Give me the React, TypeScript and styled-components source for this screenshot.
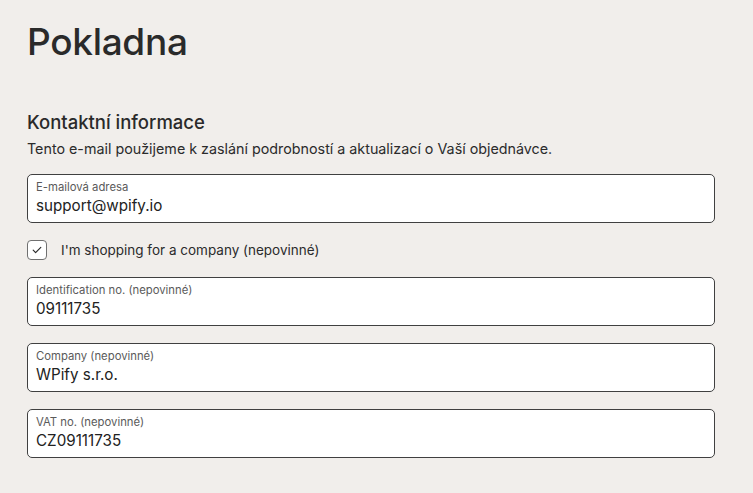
import React from 'react'
import styled, { createGlobalStyle } from 'styled-components'

const GlobalStyle = createGlobalStyle`
  html, body {
    margin: 0;
    padding: 0;
    background: #f1eeeb;
  }
  body {
    font-family: Inter, "Noto Sans", sans-serif;
    color: #2b2b2b;
  }
`

interface FieldProps {
  label: string
  value: string
}

function Field({ label, value }: FieldProps) {
  return (
    <FieldBox>
      <FieldLabel>{label}</FieldLabel>
      <FieldValue>{value}</FieldValue>
    </FieldBox>
  )
}

function App() {
  return (
    <Page>
      <GlobalStyle />
      <Title>Pokladna</Title>

      <Section>
        <SectionTitle>Kontaktní informace</SectionTitle>
        <Description>
          Tento e-mail použijeme k zaslání podrobností a aktualizací o Vaší objednávce.
        </Description>

        <Field label="E-mailová adresa" value="support@wpify.io" />

        <CheckRow>
          <CheckBox>
            <svg width="14" height="14" viewBox="0 0 14 14" fill="none">
              <path d="M3.2 7.2l2.4 2.4L10.8 4.4" stroke="#2b2b2b" strokeWidth="1.2" strokeLinecap="round" strokeLinejoin="round" />
            </svg>
          </CheckBox>
          <CheckLabel>I'm shopping for a company (nepovinné)</CheckLabel>
        </CheckRow>

        <Field label="Identification no. (nepovinné)" value="09111735" />
        <Field label="Company (nepovinné)" value="WPify s.r.o." />
        <Field label="VAT no. (nepovinné)" value="CZ09111735" />
      </Section>
    </Page>
  )
}

const Page = styled.div`
  width: 688px;
  padding: 19px 38px 0 27px;
`

const Title = styled.h1`
  margin: 0;
  font-size: 37px;
  font-weight: 500;
  line-height: 45px;
  letter-spacing: -0.3px;
  color: #2a2a2a;
`

const Section = styled.div`
  margin-top: 47px;
  display: flex;
  flex-direction: column;
`

const SectionTitle = styled.h2`
  margin: 0;
  font-size: 18.5px;
  font-weight: 500;
  line-height: 22px;
  color: #2a2a2a;
`

const Description = styled.p`
  margin: 7px 0 16px;
  font-size: 14.3px;
  line-height: 18px;
  color: #2b2b2b;
`

const FieldBox = styled.div`
  box-sizing: border-box;
  height: 49px;
  margin-bottom: 17px;
  padding: 5px 8px 0;
  background: #fff;
  border: 1px solid #404040;
  border-radius: 5px;
  display: flex;
  flex-direction: column;
`

const FieldLabel = styled.span`
  font-size: 11.3px;
  line-height: 14px;
  color: #5a5a5a;
`

const FieldValue = styled.span`
  margin-top: 2px;
  font-size: 15.2px;
  line-height: 20px;
  color: #222;
`

const CheckRow = styled.label`
  display: flex;
  align-items: center;
  gap: 14px;
  margin: 0 0 17px;
  height: 20px;
`

const CheckBox = styled.span`
  box-sizing: border-box;
  width: 20px;
  height: 20px;
  border: 1px solid #707070;
  border-radius: 4px;
  background: #fff;
  display: flex;
  align-items: center;
  justify-content: center;
`

const CheckLabel = styled.span`
  font-size: 13.5px;
  color: #2b2b2b;
`

export default App
